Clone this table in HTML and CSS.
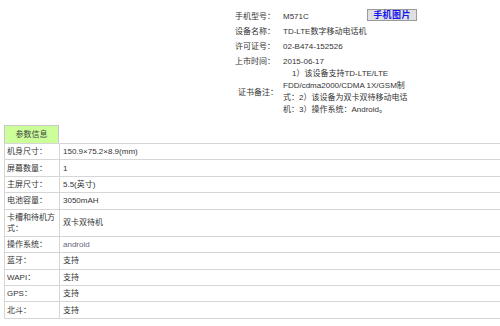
FILE: index.html
```html
<!DOCTYPE html>
<html lang="zh-CN">
<head>
<meta charset="utf-8">
<title>参数信息</title>
<link rel="stylesheet" href="styles.css">
</head>
<body>
<div class="page">
  <div class="info">
    <div class="lbl">手机型号：</div>
    <div class="val">M571C</div>
    <div class="btn-cell"><span class="btn">手机图片</span></div>

    <div class="lbl">设备名称：</div>
    <div class="val wide">TD-LTE数字移动电话机</div>

    <div class="lbl">许可证号：</div>
    <div class="val wide">02-B474-152526</div>

    <div class="lbl">上市时间：</div>
    <div class="val wide">2015-06-17</div>

    <div class="lbl lbl-remark">证书备注：</div>
    <div class="val wide remark">1）该设备支持TD-LTE/LTE FDD/cdma2000/CDMA 1X/GSM制式：2）该设备为双卡双待移动电话机：3）操作系统：Android。</div>
  </div>

  <div class="params">
    <div class="tab">参数信息</div>
    <table class="spec">
      <tr><td class="k">机身尺寸：</td><td class="v">150.9×75.2×8.9(mm)</td></tr>
      <tr><td class="k">屏幕数量：</td><td class="v">1</td></tr>
      <tr><td class="k">主屏尺寸：</td><td class="v">5.5(英寸)</td></tr>
      <tr><td class="k">电池容量：</td><td class="v">3050mAH</td></tr>
      <tr><td class="k">卡槽和待机方式：</td><td class="v">双卡双待机</td></tr>
      <tr><td class="k">操作系统：</td><td class="v light">android</td></tr>
      <tr><td class="k">蓝牙：</td><td class="v">支持</td></tr>
      <tr><td class="k">WAPI：</td><td class="v">支持</td></tr>
      <tr><td class="k">GPS：</td><td class="v">支持</td></tr>
      <tr><td class="k">北斗：</td><td class="v">支持</td></tr>
    </table>
  </div>
</div>
</body>
</html>
```

FILE: styles.css
```css
html, body {
  margin: 0;
  padding: 0;
  overflow: hidden;
  background: #ffffff;
}

body {
  font-family: "Liberation Sans", "Noto Sans CJK SC", sans-serif;
  font-size: 8px;
  color: #333333;
}

.page {
  width: 500px;
  height: 326px;
  overflow: hidden;
}

.info {
  display: grid;
  grid-template-columns: 48px 84px 60px;
  grid-template-rows: repeat(4, 15px) repeat(4, 12px);
  margin-left: 235px;
  padding-top: 9px;
}

.lbl,
.val {
  line-height: 15px;
  white-space: nowrap;
}

.val.wide {
  grid-column: 2 / 4;
}

.lbl-remark {
  grid-row: span 4;
  align-self: center;
  padding-left: 3px;
  line-height: 12px;
}

.val.remark {
  grid-row: span 4;
  white-space: normal;
  width: 126px;
  line-height: 12px;
  text-indent: 9px;
  margin-top: -1px;
}

.btn-cell {
  display: flex;
  align-items: flex-start;
}

.btn {
  display: flex;
  align-items: center;
  justify-content: center;
  width: 48px;
  height: 10px;
  border: 1px solid #9a9a9a;
  background: #e0e0e0;
  color: #1414ee;
  font-weight: bold;
  font-size: 9px;
  line-height: 10px;
  letter-spacing: 0.4px;
}

.params {
  margin-top: 8px;
  margin-left: 4px;
}

.tab {
  width: 53px;
  height: 17px;
  line-height: 17px;
  text-align: center;
  background: #ccff99;
  border: 1px solid #c8c8c8;
  border-bottom: none;
  color: #444444;
}

.spec {
  width: 530px;
  border-collapse: collapse;
  border-top: 1px solid #d6d6d6;
  border-left: 1px solid #d6d6d6;
}

.spec td {
  border-bottom: 1px solid #d6d6d6;
  padding: 2.2px 2px;
  line-height: 11px;
  vertical-align: middle;
}

.spec .k {
  width: 50px;
  border-right: 1px solid #d6d6d6;
}

.spec .v {
  padding-left: 3px;
}

.spec .light {
  color: #667;
}
```
